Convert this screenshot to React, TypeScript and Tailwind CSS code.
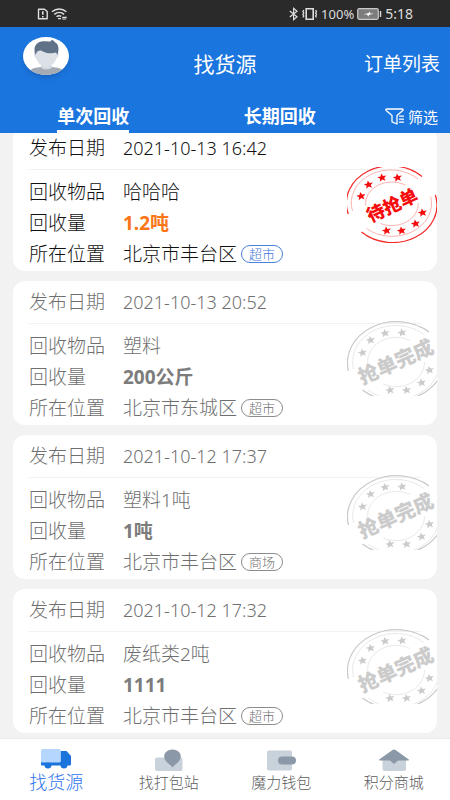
import React, { useState } from "react";

type Listing = {
  date: string;
  item: string;
  amount: string;
  place: string;
  tag: string;
  open: boolean;
};

const listings: Listing[] = [
  { date: "2021-10-13 16:42", item: "哈哈哈", amount: "1.2吨", place: "北京市丰台区", tag: "超市", open: true },
  { date: "2021-10-13 20:52", item: "塑料", amount: "200公斤", place: "北京市东城区", tag: "超市", open: false },
  { date: "2021-10-12 17:37", item: "塑料1吨", amount: "1吨", place: "北京市丰台区", tag: "商场", open: false },
  { date: "2021-10-12 17:32", item: "废纸类2吨", amount: "1111", place: "北京市丰台区", tag: "超市", open: false },
];

const STAR = "0,-4 1.3,-1.3 4.6,-1.1 2.1,0.8 2.9,3.7 0,2.1 -2.9,3.7 -2.1,0.8 -4.6,-1.1 -1.3,-1.3";

function Stars({ points }: { points: number[][] }) {
  return (
    <g>
      {points.map(([x, y]) => (
        <polygon key={`${x}-${y}`} points={STAR} transform={`translate(${x} ${y}) rotate(-10)`} />
      ))}
    </g>
  );
}

function OpenStamp() {
  return (
    <svg width="90" height="76" viewBox="0 0 90 76" className="fill-[#f50d0d]">
      <g fill="none" stroke="#f52a2a" strokeWidth="1.2">
        <path d="M1.3 47 A44.5 37.3 0 0 1 75 9.5" />
        <path d="M88.3 28 A44.5 37.3 0 0 1 14.5 65" />
      </g>
      <g fill="none" stroke="#fbb4b4" strokeWidth="1">
        <path d="M5.5 44 A39.5 33 0 0 1 71 12" />
        <path d="M83.7 29.5 A39.5 33 0 0 1 19.5 61.5" />
        <path d="M18.5 38.5 A26.5 22 0 0 1 58.5 18" />
        <path d="M71.3 36 A26.5 22 0 0 1 33.5 56.5" />
      </g>
      <Stars points={[[14, 29], [21.5, 17.5], [35, 10.5], [50.5, 10.5], [75.5, 45.5], [68.5, 56.5], [54.5, 63.5], [39.5, 63.5]]} />
      <text x="45" y="45" textAnchor="middle" transform="rotate(-25 45 38)" className="text-[18px] font-black">
        待抢单
      </text>
    </svg>
  );
}

function DoneStamp() {
  return (
    <svg width="90" height="75" viewBox="0 0 90 75" className="fill-[#cbcbcb]">
      <g fill="none" stroke="#c9c9c9" strokeWidth="1.2">
        <path d="M1.5 50 A49 41 0 0 1 82 11" />
        <path d="M96.5 31 A49 41 0 0 1 15.5 69" />
      </g>
      <g fill="none" stroke="#e9e9e9" strokeWidth="1">
        <path d="M6.5 48 A43 36.5 0 0 1 77 13.5" />
        <path d="M91.5 34 A43 36.5 0 0 1 21 69" />
        <path d="M20.5 42 A28.5 24.5 0 0 1 63 19.5" />
        <path d="M77.5 41 A28.5 24.5 0 0 1 36 63" />
      </g>
      <Stars points={[[15.5, 31.5], [23.5, 19], [38, 12], [55, 11.5], [82.5, 49], [74.5, 61.5], [59.5, 69], [43, 69]]} />
      <text
        x="49"
        y="48"
        textAnchor="middle"
        transform="rotate(-24 49 41)"
        stroke="#ffffff"
        strokeWidth="2"
        paintOrder="stroke"
        className="text-[20px] font-black"
      >
        抢单完成
      </text>
    </svg>
  );
}

function Row({ label, children }: { label: string; children: React.ReactNode }) {
  return (
    <div className="flex h-[31px] items-center">
      <dt className="w-[94px] shrink-0">{label}</dt>
      <dd className="flex items-center">{children}</dd>
    </div>
  );
}

function Card({ listing }: { listing: Listing }) {
  const { open } = listing;
  return (
    <li
      className={`relative rounded-xl bg-white px-4 pb-0.5 text-[19px] font-light leading-6 ${
        open ? "text-[#111111]" : "text-[#6f6f6f]"
      }`}
    >
      <dl>
        <div className="flex h-[43px] items-center border-b border-[#f2f2f2]">
          <dt className="w-[94px] shrink-0">发布日期</dt>
          <dd className="text-lg">{listing.date}</dd>
        </div>
        <div className="pt-1.5">
          <Row label="回收物品">{listing.item}</Row>
          <Row label="回收量">
            <strong className={`font-bold ${open ? "text-[#fb7519]" : "text-[#7c7c7c]"}`}>{listing.amount}</strong>
          </Row>
          <Row label="所在位置">
            {listing.place}
            <span
              className={`ml-1 rounded-full border px-[7px] text-[13px] leading-4 ${
                open ? "border-[#4a80dd] text-[#3d76da]" : "border-[#8c8c8c]"
              }`}
            >
              {listing.tag}
            </span>
          </Row>
        </div>
      </dl>
      <div className="absolute right-0 top-10">{open ? <OpenStamp /> : <DoneStamp />}</div>
    </li>
  );
}

function StatusBar() {
  return (
    <div className="flex h-[27px] shrink-0 items-center bg-[#2a2a2a] px-[37px] text-[#dedede]">
      <svg width="31" height="14" viewBox="0 0 31 14" fill="none" stroke="#dedede">
        <path d="M1.5 2.2h6l2.7 2.4v7.2h-8.7z" strokeWidth="1.4" strokeLinejoin="round" />
        <path d="M5.8 4.2v3.6M5.8 9v1.4" strokeWidth="1.6" />
        <path d="M15 4.8c4.2-3.6 10.2-3.6 14.4 0M17.3 7.4c2.9-2.4 7-2.4 9.8 0M19.6 9.7c1.3-1.1 3.3-1.2 4.6-.3" strokeWidth="1.5" />
        <path d="M21 11.6h3M25.2 10.4h4.6M25.2 12h4" strokeWidth="1.2" />
      </svg>
      <div className="ml-auto flex items-center gap-[3px]">
        <svg width="29" height="14" viewBox="0 0 29 14" fill="none" stroke="#dedede">
          <path d="M.8 4l7.2 5.8L4.600 12.7V1.3L8 4.2.8 10" strokeWidth="1.2" />
          <path d="M17.2 1.8h7v10.4h-7z" strokeWidth="1.6" />
          <path d="M14.8 3l-.9 1.5.9 1.5-.9 1.5.9 1.5-.9 1.5M26.6 3l.9 1.5-.9 1.5.9 1.5-.9 1.5.9 1.5" strokeWidth="1.3" />
        </svg>
        <span className="text-[13px] leading-4">100%</span>
        <svg width="25" height="12" viewBox="0 0 25 12">
          <rect x=".7" y=".7" width="20.6" height="10.6" rx="1.5" fill="#7c7c7c" stroke="#c9c9c9" strokeWidth="1.2" />
          <path d="M22.8 3h1.4v6h-1.4z" fill="#dedede" />
          <path d="M6.500 6.300l5.200-1.300.7-1.800 1 2.400h3.600l-5 1.300-.8 1.900-1-2.300z" fill="#fff" />
        </svg>
        <span className="text-sm leading-4">5:18</span>
      </div>
    </div>
  );
}

function Avatar() {
  return (
    <button type="button" aria-label="个人中心" className="h-[38px] w-[46px] overflow-hidden rounded-[50%] bg-white shadow-md">
      <svg width="46" height="38" viewBox="0 0 46 38">
        <path d="M7 33.500c2-2.500 6-3 11-3.500h11c5 .5 9 1 11 3.500v4.500H7z" fill="#a4abb5" />
        <path d="M18 25h11v5.500c-2 2.500-9 2.500-11 0z" fill="#d3d9e1" />
        <path d="M12.300 15c-2 .2-1.600 5.500 1 6.500 2 5.500 6 8.500 10 8.500s8-3 10-8.500c2.600-1 3-6.300 1-6.500l-2-6H14z" fill="#dce1e8" />
        <path d="M12.500 18c-1.800-5.500-1.300-10.500 3.500-12.700 4-1.800 7.500-.5 11-.8 1 0 1.500-.7 1.300-1.700 2 .4 3.200 1.300 3.600 2.500 3.600 1.500 4.600 6.500 2.600 12.700-.4-1-.8-1.700-1.500-2.500-4 1.500-10 1-15-2-2.800-.2-4.500.8-5.500 4.500z" fill="#5f7288" />
      </svg>
    </button>
  );
}

function FilterIcon() {
  return (
    <svg width="20" height="17" viewBox="0 0 20 17" fill="none" stroke="#fff" strokeWidth="1.3" strokeLinejoin="round" strokeLinecap="round">
      <path d="M12 14.500v1.500l-5-2.200V7.600L1.200 2.600c-.6-.7-.3-1.600.6-1.600h15.400c.9 0 1.200.9.6 1.600L12 7.600z" />
      <path d="M14.500 8.200h4M14.500 11.200h4M14.500 14.200h4" />
    </svg>
  );
}

const navItems = [
  {
    label: "找货源",
    icon: (
      <>
        <path d="M0 13h30v2.500q0 1-1 1h-28q-1 0-1-1zM19.500 2h6l4.500 5v8H19.500z" fill="#1b73dc" />
        <rect width="19.500" height="13.500" rx="1.500" fill="#b5d6ff" />
        <ellipse cx="7" cy="16.500" rx="3.400" ry="3" fill="#1b73dc" />
        <ellipse cx="23" cy="16.500" rx="3.400" ry="3" fill="#1b73dc" />
      </>
    ),
  },
  {
    label: "找打包站",
    icon: (
      <>
        <rect x="1" y="8.500" width="27.500" height="13.500" rx="2" fill="#c9d1db" />
        <path d="M18.500 18.500c-2.500-3.500-8.300-6-8.300-11 0-4 3.700-7 8.300-7s8.300 3 8.300 7c0 5-5.800 7.500-8.300 11z" fill="#8b98a8" />
      </>
    ),
  },
  {
    label: "魔力钱包",
    icon: (
      <>
        <rect x="1" y="1.500" width="25" height="20" rx="2" fill="#c9d1db" />
        <rect x="12" y="7.500" width="18" height="8" rx="4" fill="#8b98a8" />
      </>
    ),
  },
  {
    label: "积分商城",
    icon: (
      <>
        <path d="M3.500 11h23.500v9q0 2-2 2H5.500q-2 0-2-2z" fill="#c9d1db" />
        <path d="M15 .5q.8 0 1.500.5L29.800 10.500q.4 1-.8 1H19L15 15l-4-3.500H1q-1.200 0-.8-1L13.500 1q.7-.5 1.500-.5z" fill="#8b98a8" />
      </>
    ),
  },
];

export default function App() {
  const [tab, setTab] = useState(0);

  return (
    <div className="flex h-screen flex-col overflow-hidden bg-[#f2f2f2] font-['Noto_Sans','Noto_Sans_CJK_SC',sans-serif]">
      <StatusBar />
      <header className="shrink-0 bg-[#1b75de] text-white">
        <div className="grid h-[73px] grid-cols-3 items-center px-2.5">
          <div className="pb-2.5 pl-[13px]">
            <Avatar />
          </div>
          <h1 className="text-center text-[21px] leading-7">找货源</h1>
          <a href="#orders" className="text-right text-[19px] leading-7">
            订单列表
          </a>
        </div>
        <div className="flex h-[33px]">
          {["单次回收", "长期回收"].map((name, i) => (
            <button key={name} type="button" onClick={() => setTab(i)} className="flex flex-1 justify-center">
              <span
                className={`h-full border-b-[3px] text-lg font-bold leading-8 ${
                  tab === i ? "border-white" : "border-transparent"
                }`}
              >
                {name}
              </span>
            </button>
          ))}
          <button type="button" className="flex w-[77px] items-center gap-[3px] pl-3 text-[15px] leading-[30px]">
            <FilterIcon />
            筛选
          </button>
        </div>
      </header>

      <main className="min-h-0 flex-1 overflow-hidden px-[13px]">
        <ul className="-mt-1.5 flex flex-col gap-2.5">
          {listings.map((listing) => (
            <Card key={listing.date} listing={listing} />
          ))}
        </ul>
      </main>

      <nav className="grid h-[62px] shrink-0 grid-cols-4 border-t border-[#ececec] bg-white">
        {navItems.map((item, i) => (
          <a
            key={item.label}
            href={`#nav-${i}`}
            className={`flex flex-col items-center pt-2.5 font-light ${
              i === 0 ? "text-lg leading-5 text-[#2f74f0]" : "text-[15px] leading-5 text-[#5c5c5c]"
            }`}
          >
            <svg width="30" height="23" viewBox="0 0 30 23">
              {item.icon}
            </svg>
            {item.label}
          </a>
        ))}
      </nav>
    </div>
  );
}
